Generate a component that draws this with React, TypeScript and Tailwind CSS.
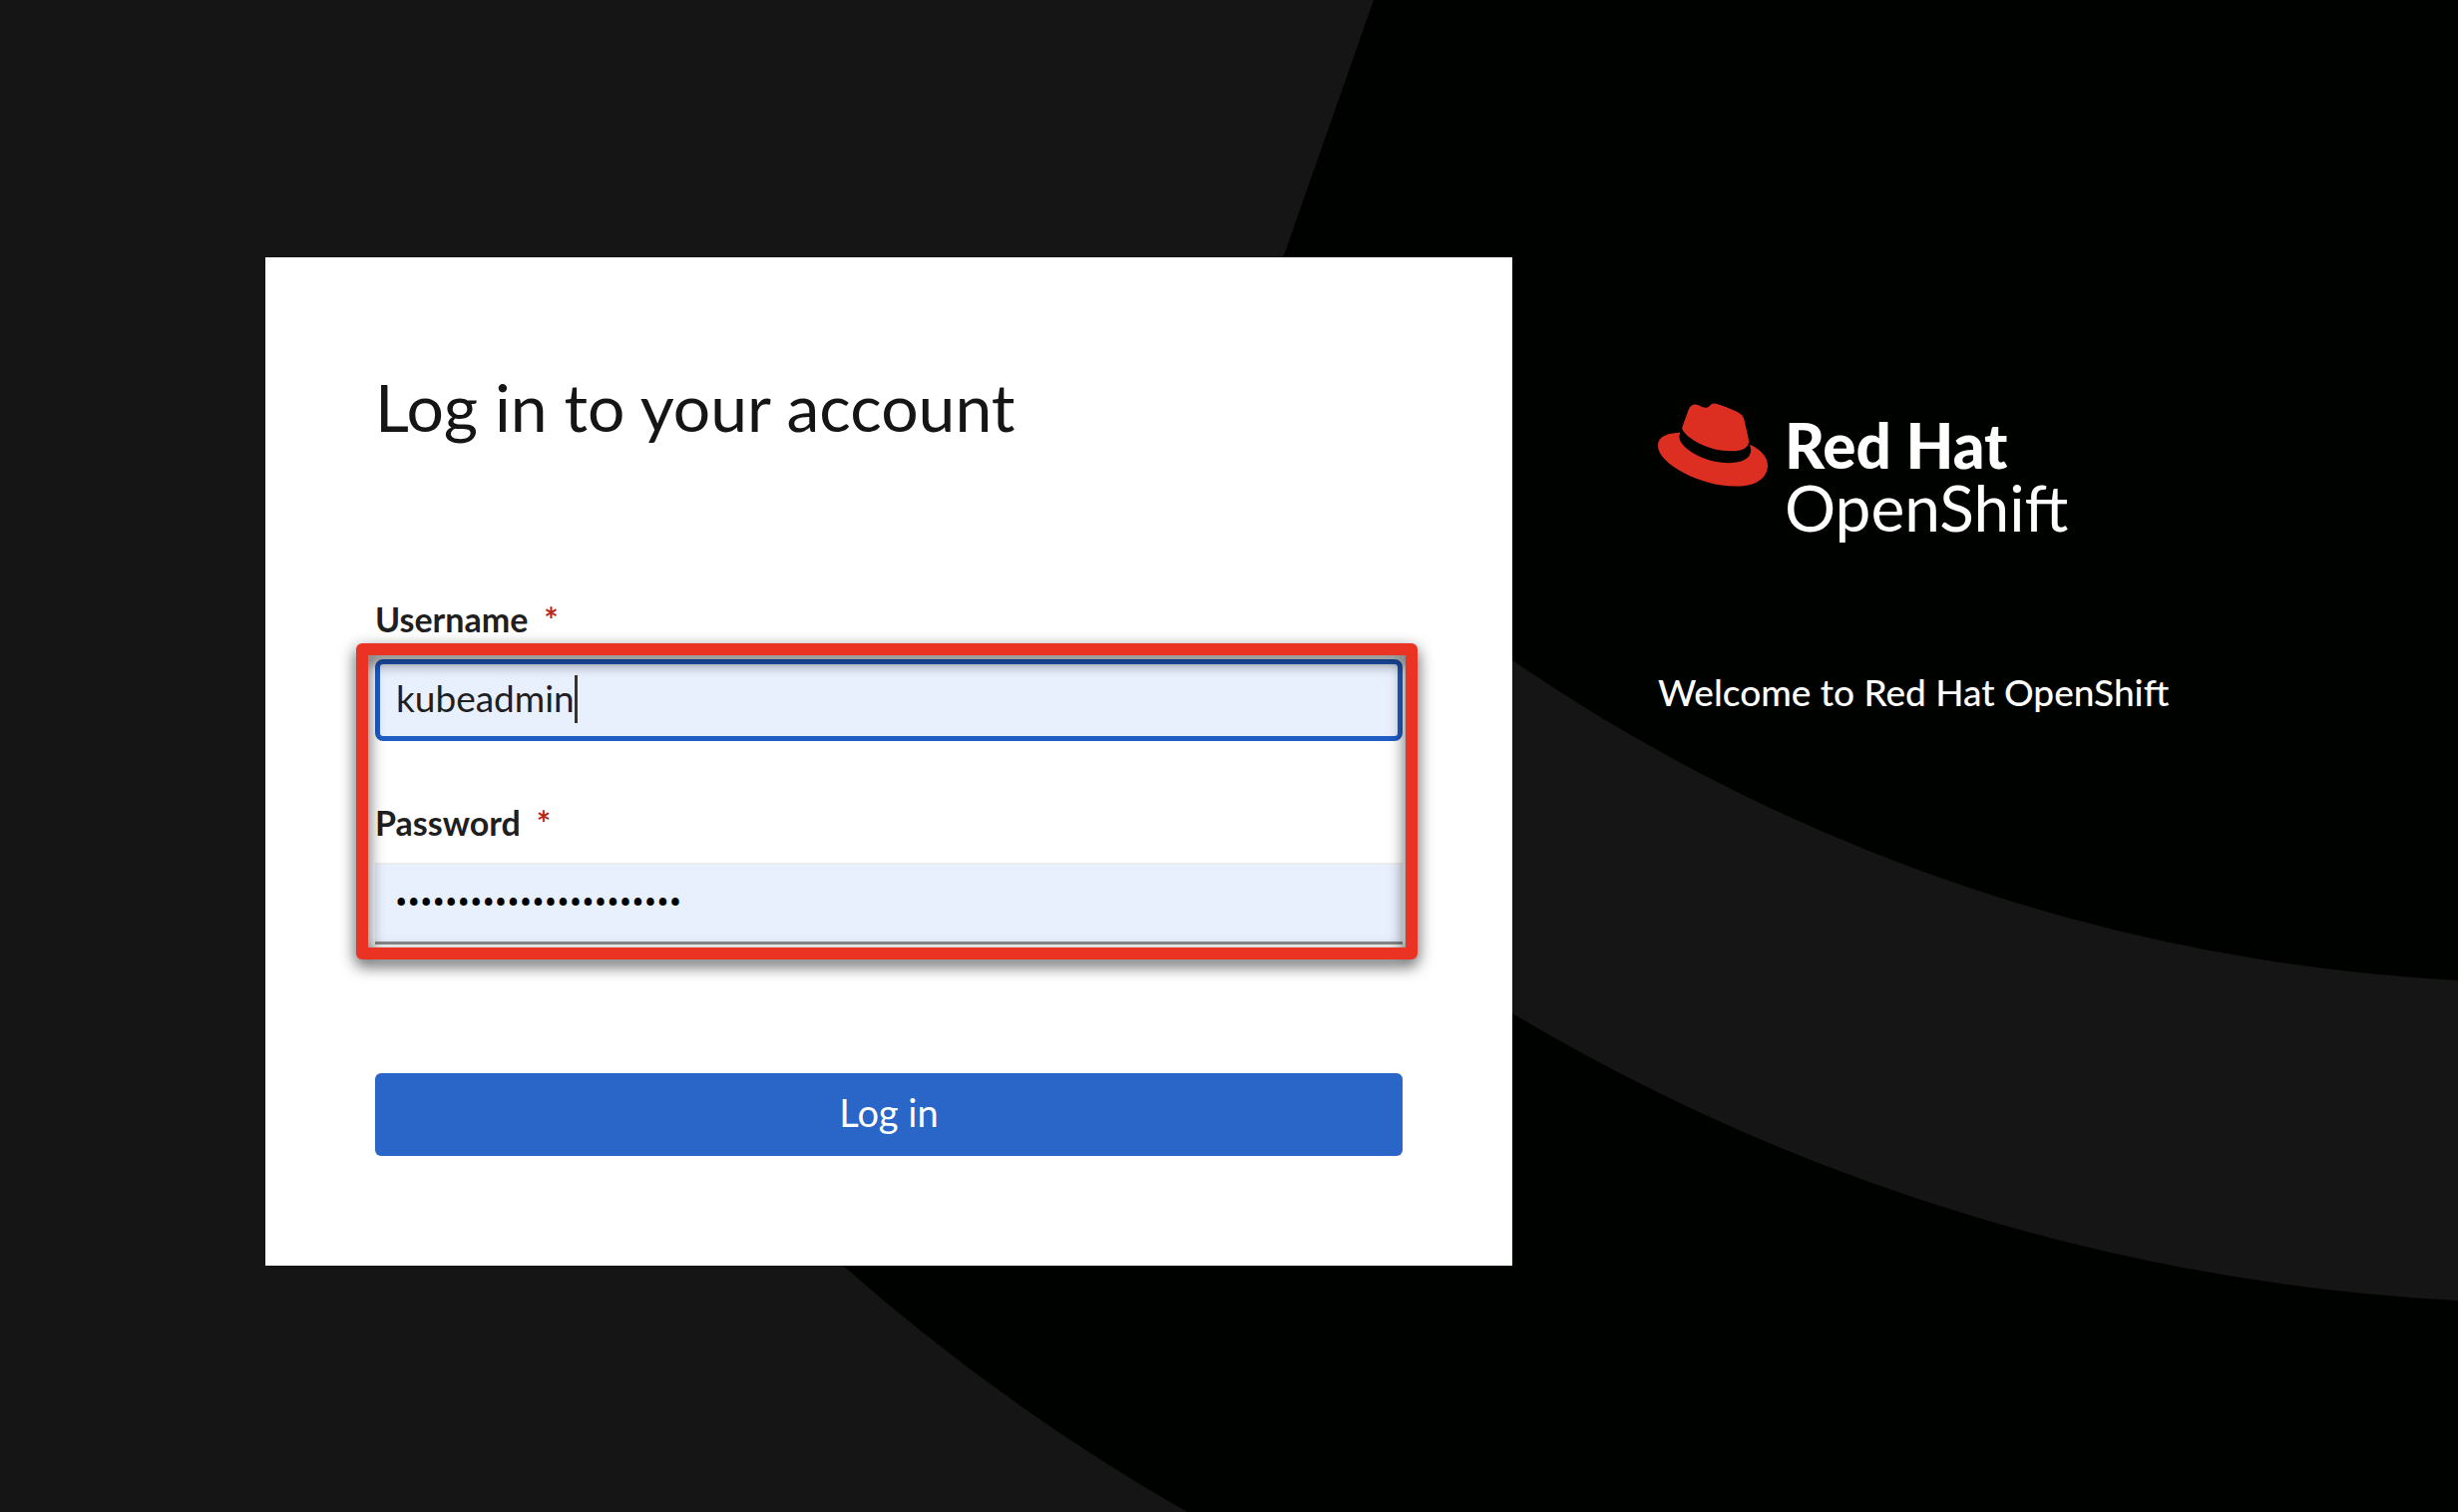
import React from "react";
import { FaRedhat } from "react-icons/fa";

function Backdrop() {
  return (
    <svg
      className="absolute inset-0 h-full w-full"
      viewBox="0 0 2464 1516"
      preserveAspectRatio="xMidYMid slice"
      aria-hidden="true"
    >
      <rect width="2464" height="1516" fill="#151515" />
      <path
        d="M1377 0 L1287 256 L845 1269 Q1005 1410 1190 1516 H2464 V0 Z"
        fill="#000200"
      />
      <path
        d="M1400 568 L1516 662 A1845 1845 0 0 0 2464 983 V1304 A2060 2060 0 0 1 1516 1016 L1400 940 Z"
        fill="#151515"
      />
    </svg>
  );
}

function FieldLabel({ htmlFor, text }: { htmlFor: string; text: string }) {
  return (
    <label
      htmlFor={htmlFor}
      className="flex gap-4 text-[34px] leading-10 font-bold text-[#1f1f1f]"
    >
      {text}
      <span className="text-[#b8291a]" aria-hidden="true">
        *
      </span>
    </label>
  );
}

export default function App() {
  return (
    <main className="relative min-h-screen overflow-hidden bg-[#151515] font-['Lato',sans-serif]">
      <Backdrop />
      <div className="relative grid grid-cols-[1250fr_682fr] items-start gap-[146px] pt-[258px] pr-[120px] pb-20 pl-[266px]">
        <section className="bg-white p-[110px]">
          <h1 className="text-[66px] leading-[80px] text-[#151515]">
            Log in to your account
          </h1>
          <form className="mt-[153px]" onSubmit={(e) => e.preventDefault()}>
            <div className="relative">
              <FieldLabel htmlFor="username" text="Username" />
              <div className="relative mt-5">
                <input
                  id="username"
                  type="text"
                  defaultValue="kubeadmin"
                  className="block h-[82px] w-full rounded-lg border-[5px] border-[#1f5cc4] bg-[#e8effd] px-4 pb-1.5 text-[37px] text-[#1f1f1f] outline-none"
                />
                <span className="absolute top-4 left-[200px] h-12 w-[3px] bg-[#333]" />
              </div>
              <div className="mt-[62px]">
                <FieldLabel htmlFor="password" text="Password" />
                <input
                  id="password"
                  type="password"
                  defaultValue="aaaaabbbbbcccccdddddeee"
                  className="mt-5 block h-[82px] w-full border-t-2 border-b-[3px] border-t-[#ececec] border-b-[#8a8d90] bg-[#e8effd] px-5 font-['Roboto',sans-serif] text-[37px] text-black outline-none"
                />
              </div>
              <div className="pointer-events-none absolute top-11 -right-[15px] -bottom-[15px] -left-[19px] rounded-md border-12 border-[#eb3323] drop-shadow-[0_6px_8px_rgba(0,0,0,0.7)]" />
            </div>
            <button
              type="submit"
              className="mt-[129px] block h-[83px] w-full rounded-md bg-[#2a66c8] pb-1 text-[38px] text-white"
            >
              Log in
            </button>
          </form>
        </section>
        <aside className="pt-[133px] text-white">
          <div className="flex items-start gap-[17px]">
            <FaRedhat className="size-[110px] text-[#dd2f21]" aria-hidden="true" />
            <div className="pt-6">
              <p className="text-[62px] leading-[62px] font-black">Red Hat</p>
              <p className="text-[64px] leading-[64px]">OpenShift</p>
            </div>
          </div>
          <p className="mt-[129px] text-[37px] leading-[48px] font-medium">
            Welcome to Red Hat OpenShift
          </p>
        </aside>
      </div>
    </main>
  );
}
